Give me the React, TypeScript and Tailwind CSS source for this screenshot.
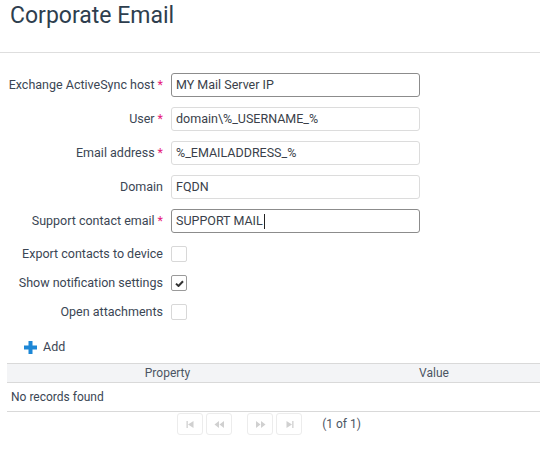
import React from 'react';

const Star = () => <span className="text-[#e5197a] ml-[3px]">*</span>;

const fields = [
  { label: 'Exchange ActiveSync host', value: 'MY Mail Server IP', required: true, focused: true },
  { label: 'User', value: 'domain\\%_USERNAME_%', required: true },
  { label: 'Email address', value: '%_EMAILADDRESS_%', required: true },
  { label: 'Domain', value: 'FQDN' },
  { label: 'Support contact email', value: 'SUPPORT MAIL', required: true, focused: true, caret: true },
];

const checks = [
  { label: 'Export contacts to device', checked: false },
  { label: 'Show notification settings', checked: true },
  { label: 'Open attachments', checked: false },
];

const PagerIcon = ({ kind }: { kind: 'first' | 'prev' | 'next' | 'last' }) => (
  <svg width="11" height="7" viewBox="0 0 11 7" fill="#d0d0d0">
    {kind === 'first' && (
      <>
        <rect x="1.5" y="0" width="1.3" height="7" />
        <path d="M3 3.5 L8.5 0 L8.5 7 Z" />
      </>
    )}
    {kind === 'prev' && (
      <>
        <path d="M0.5 3.5 L5 0 L5 7 Z" />
        <path d="M5.5 3.5 L10 0 L10 7 Z" />
      </>
    )}
    {kind === 'next' && (
      <>
        <path d="M1 0 L5.5 3.5 L1 7 Z" />
        <path d="M6 0 L10.5 3.5 L6 7 Z" />
      </>
    )}
    {kind === 'last' && (
      <>
        <path d="M2.5 0 L8 3.5 L2.5 7 Z" />
        <rect x="8.2" y="0" width="1.3" height="7" />
      </>
    )}
  </svg>
);

const PagerButton = ({ kind }: { kind: 'first' | 'prev' | 'next' | 'last' }) => (
  <div className="w-[26px] h-[22px] border border-[#ececec] rounded-[3px] flex items-center justify-center">
    <PagerIcon kind={kind} />
  </div>
);

export default function App() {
  return (
    <div className="w-[540px] h-[463px] bg-white overflow-hidden text-[#3b4654] text-[12.5px]" style={{ fontFamily: 'Roboto, "Liberation Sans", sans-serif' }}>
      <div className="h-[53px] border-b border-[#dedede] pl-[10px] pt-[1px]">
        <h1 className="text-[23px] leading-[30px] text-[#2e3e4e] font-normal">Corporate Email</h1>
      </div>

      <div className="pt-[20px] flex flex-col gap-[10px]">
        {fields.map((f) => (
          <div key={f.label} className="flex items-center h-[24px]">
            <label className="w-[163px] text-right whitespace-nowrap">
              {f.label}
              {f.required && <Star />}
            </label>
            <div
              className={`ml-[8px] w-[249px] h-[24px] rounded-[3px] border px-[4px] flex items-center text-[#3a3f4a] ${
                f.focused ? 'border-[#8c8c8c]' : 'border-[#dcdcdc]'
              }`}
            >
              {f.value}
              {f.caret && <span className="inline-block w-px h-[15px] bg-[#222] ml-[1px]" />}
            </div>
          </div>
        ))}
      </div>

      <div className="pt-[13px] flex flex-col gap-[13px]">
        {checks.map((c) => (
          <div key={c.label} className="flex items-center h-[16px]">
            <label className="w-[163px] text-right whitespace-nowrap">{c.label}</label>
            <div
              className={`ml-[8px] w-[16px] h-[16px] rounded-[2px] border flex items-center justify-center ${
                c.checked ? 'border-[#9a9a9a]' : 'border-[#d8d8d8]'
              }`}
            >
              {c.checked && (
                <svg width="9" height="7" viewBox="0 0 9 7">
                  <path d="M1 3.6 L3.5 6 L8 1.2" stroke="#333" strokeWidth="2" fill="none" />
                </svg>
              )}
            </div>
          </div>
        ))}
      </div>

      <div className="flex items-center h-[24px] mt-[15px] pl-[24px]">
        <svg width="13" height="13" viewBox="0 0 13 13">
          <rect x="4.5" y="0" width="4" height="13" fill="#1d87d6" />
          <rect x="0" y="4.5" width="13" height="4" fill="#1d87d6" />
        </svg>
        <span className="ml-[6px] text-[#3b4654]">Add</span>
      </div>

      <div className="ml-[7px] mt-[4px]">
        <div className="flex h-[20px] bg-[#f3f4f6] border-y border-[#d9d9d9] text-[#4b5563] text-[12px]">
          <div className="w-[321px] flex items-center justify-center">Property</div>
          <div className="flex-1 flex items-center justify-center">Value</div>
        </div>
        <div className="h-[29px] flex items-center pl-[4px] pb-[1px] border-b border-[#d9d9d9] text-[12px]">No records found</div>
        <div className="flex items-center justify-center gap-[3px] pt-[1px] pr-[9px]">
          <PagerButton kind="first" />
          <PagerButton kind="prev" />
          <div className="w-[9px]" />
          <PagerButton kind="next" />
          <PagerButton kind="last" />
          <span className="ml-[17px] text-[#4b5563] text-[12px]">(1 of 1)</span>
        </div>
      </div>
    </div>
  );
}
